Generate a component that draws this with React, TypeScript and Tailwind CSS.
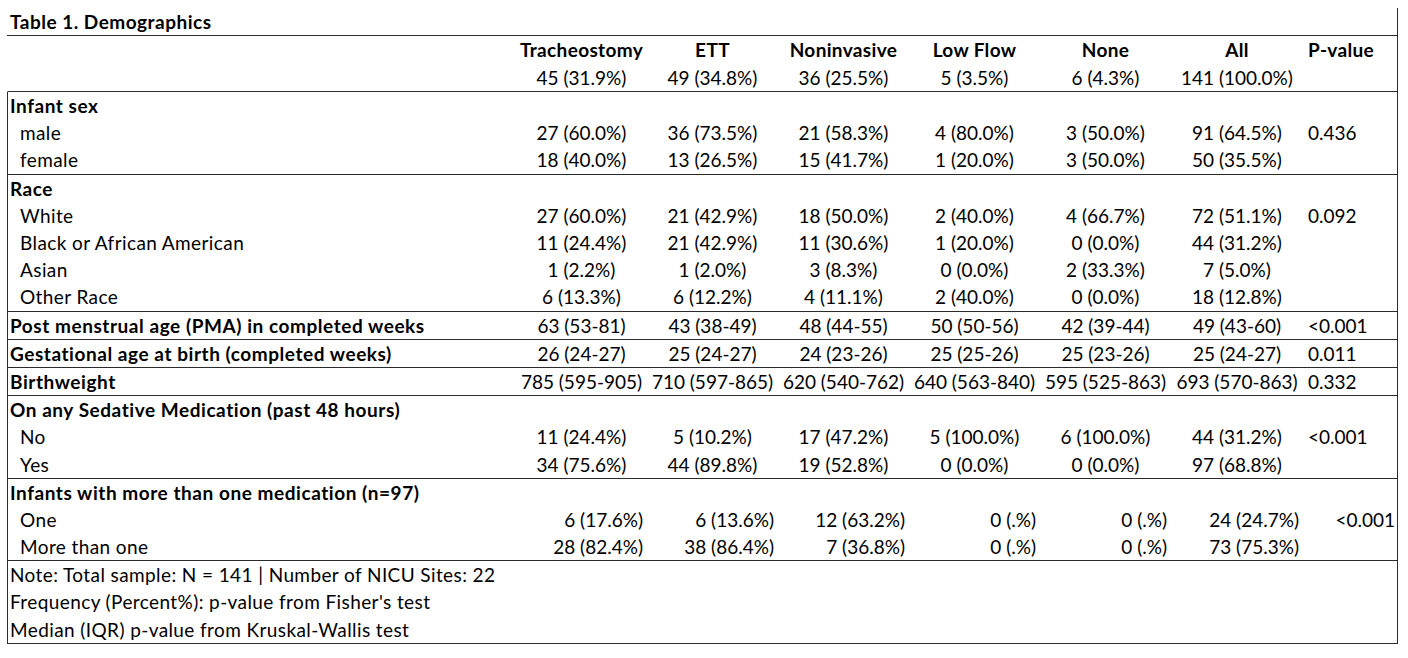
type Row = {
  label: string;
  bold?: boolean;
  sub?: boolean;
  vals?: string[];
  p?: string;
  right?: boolean;
};

const groups: Row[][] = [
  [
    { label: "Infant sex", bold: true },
    { label: "male", sub: true, vals: ["27 (60.0%)", "36 (73.5%)", "21 (58.3%)", "4 (80.0%)", "3 (50.0%)", "91 (64.5%)"], p: "0.436" },
    { label: "female", sub: true, vals: ["18 (40.0%)", "13 (26.5%)", "15 (41.7%)", "1 (20.0%)", "3 (50.0%)", "50 (35.5%)"] },
  ],
  [
    { label: "Race", bold: true },
    { label: "White", sub: true, vals: ["27 (60.0%)", "21 (42.9%)", "18 (50.0%)", "2 (40.0%)", "4 (66.7%)", "72 (51.1%)"], p: "0.092" },
    { label: "Black or African American", sub: true, vals: ["11 (24.4%)", "21 (42.9%)", "11 (30.6%)", "1 (20.0%)", "0 (0.0%)", "44 (31.2%)"] },
    { label: "Asian", sub: true, vals: ["1 (2.2%)", "1 (2.0%)", "3 (8.3%)", "0 (0.0%)", "2 (33.3%)", "7 (5.0%)"] },
    { label: "Other Race", sub: true, vals: ["6 (13.3%)", "6 (12.2%)", "4 (11.1%)", "2 (40.0%)", "0 (0.0%)", "18 (12.8%)"] },
  ],
  [
    { label: "Post menstrual age (PMA) in completed weeks", bold: true, vals: ["63 (53-81)", "43 (38-49)", "48 (44-55)", "50 (50-56)", "42 (39-44)", "49 (43-60)"], p: "<0.001" },
  ],
  [
    { label: "Gestational age at birth (completed weeks)", bold: true, vals: ["26 (24-27)", "25 (24-27)", "24 (23-26)", "25 (25-26)", "25 (23-26)", "25 (24-27)"], p: "0.011" },
  ],
  [
    { label: "Birthweight", bold: true, vals: ["785 (595-905)", "710 (597-865)", "620 (540-762)", "640 (563-840)", "595 (525-863)", "693 (570-863)"], p: "0.332" },
  ],
  [
    { label: "On any Sedative Medication (past 48 hours)", bold: true },
    { label: "No", sub: true, vals: ["11 (24.4%)", "5 (10.2%)", "17 (47.2%)", "5 (100.0%)", "6 (100.0%)", "44 (31.2%)"], p: "<0.001" },
    { label: "Yes", sub: true, vals: ["34 (75.6%)", "44 (89.8%)", "19 (52.8%)", "0 (0.0%)", "0 (0.0%)", "97 (68.8%)"] },
  ],
  [
    { label: "Infants with more than one medication (n=97)", bold: true },
    { label: "One", sub: true, right: true, vals: ["6 (17.6%)", "6 (13.6%)", "12 (63.2%)", "0 (.%)", "0 (.%)", "24 (24.7%)"], p: "<0.001" },
    { label: "More than one", sub: true, right: true, vals: ["28 (82.4%)", "38 (86.4%)", "7 (36.8%)", "0 (.%)", "0 (.%)", "73 (75.3%)"] },
  ],
];

const notes = [
  "Note: Total sample: N = 141 | Number of NICU Sites: 22",
  "Frequency (Percent%): p-value from Fisher's test",
  "Median (IQR) p-value from Kruskal-Wallis test",
];

const grid = "grid grid-cols-[508px_131px_131px_131px_131px_131px_132px_1fr] h-[27.2px] items-center";

function TableRow({ r }: { r: Row }) {
  return (
    <div className={grid}>
      <div
        className={`whitespace-nowrap ${r.bold ? "font-bold pl-[2px] tracking-[0.55px]" : ""} ${
          r.sub ? "pl-[12px] tracking-[0.4px]" : ""
        }`}
      >
        {r.label}
      </div>
      {(r.vals ?? ["", "", "", "", "", ""]).map((v, i) => (
        <div key={i} className={`whitespace-nowrap ${r.right ? "text-right pr-[4px]" : "text-center"}`}>
          {v}
        </div>
      ))}
      <div className={`whitespace-nowrap ${r.right ? "text-right pr-[2px]" : "pl-[5px]"}`}>{r.p ?? ""}</div>
    </div>
  );
}

export default function App() {
  return (
    <div className="w-[1408px] h-[658px] bg-white text-black text-[19px] leading-none font-['Lato',sans-serif]">
      <div className="ml-[7px] w-[1391px]">
        <div className="flex justify-between h-[36px] border-b border-[#2b2b2b]">
          <div className="self-end pb-[4px] pl-[3px] font-bold tracking-[0.5px]">Table 1. Demographics</div>
          <div className="mt-[8px] border-r border-[#2b2b2b]" />
        </div>

        <div className="border-l border-l-transparent border-r border-r-[#2b2b2b] border-b border-b-[#2b2b2b]">
          <div className={`${grid} h-[27.5px] font-bold tracking-[0.35px]`}>
            <div />
            <div className="text-center">Tracheostomy</div>
            <div className="text-center">ETT</div>
            <div className="text-center">Noninvasive</div>
            <div className="text-center">Low Flow</div>
            <div className="text-center">None</div>
            <div className="text-center">All</div>
            <div className="pl-[5px]">P-value</div>
          </div>
          <div className={`${grid} h-[27.5px]`}>
            <div />
            <div className="text-center">45 (31.9%)</div>
            <div className="text-center">49 (34.8%)</div>
            <div className="text-center">36 (25.5%)</div>
            <div className="text-center">5 (3.5%)</div>
            <div className="text-center">6 (4.3%)</div>
            <div className="text-center">141 (100.0%)</div>
            <div />
          </div>
        </div>

        {groups.map((g, gi) => (
          <div key={gi} className="border-x border-b border-[#2b2b2b]">
            {g.map((r, ri) => (
              <TableRow key={ri} r={r} />
            ))}
          </div>
        ))}

        <div className="border-x border-b border-[#2b2b2b]">
          {notes.map((n) => (
            <div key={n} className="h-[27.2px] flex items-center pl-[2px] whitespace-nowrap tracking-[0.4px]">
              {n}
            </div>
          ))}
        </div>
      </div>
    </div>
  );
}
